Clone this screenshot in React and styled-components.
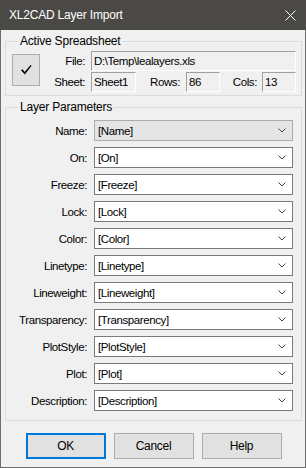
import React from "react";
import styled, { createGlobalStyle } from "styled-components";

const GlobalStyle = createGlobalStyle`
  html, body {
    margin: 0;
    padding: 0;
    background: #f0f0f0;
  }
  * {
    box-sizing: border-box;
  }
`;

const Window = styled.div`
  width: 306px;
  height: 468px;
  border: 1px solid #6d6d6d;
  border-top: none;
  background: #f0f0f0;
  font-family: "Liberation Sans", Arial, sans-serif;
  font-size: 11.5px;
  letter-spacing: -0.4px;
  color: #000;
  display: flex;
  flex-direction: column;
`;

const TitleBar = styled.div`
  height: 30px;
  margin: 0 -1px;
  background: #4a4946;
  color: #fff;
  display: flex;
  align-items: center;
  justify-content: space-between;
  padding: 0 10px 0 9px;
  font-size: 12px;
  letter-spacing: -0.2px;
`;

const CloseIcon = () => (
  <svg width="11" height="11" viewBox="0 0 11 11">
    <path d="M0.5 0.5 L10.5 10.5 M10.5 0.5 L0.5 10.5" stroke="#fff" strokeWidth="1" />
  </svg>
);

const Body = styled.div`
  flex: 1;
  display: flex;
  flex-direction: column;
  padding: 4px 3px 0 4px;
`;

const GroupBox = styled.fieldset`
  margin: ${(p) => p.$top || 0}px 0 0 0;
  padding: ${(p) => p.$pad};
  border: 1px solid #dcdcdc;
  min-width: 0;
`;

const Legend = styled.legend`
  margin-left: 6px;
  padding: 0 2px;
  font-size: 12px;
  line-height: 14px;
  letter-spacing: -0.2px;
`;

const SheetRow = styled.div`
  display: flex;
  align-items: flex-start;
`;

const CheckButton = styled.button`
  width: 29px;
  height: 32px;
  margin: 3px 5px 0 0;
  padding: 0;
  border: 1px solid #adadad;
  background: #e1e1e1;
  display: flex;
  align-items: center;
  justify-content: center;
`;

const CheckIcon = () => (
  <svg width="11" height="10" viewBox="0 0 11 10">
    <polygon points="0,5.2 1.6,4.2 3.6,7 9.6,0 10.6,0.7 3.8,9.6" fill="#000" />
  </svg>
);

const Fields = styled.div`
  flex: 1;
  display: flex;
  flex-direction: column;
  gap: 1px;
`;

const FieldLine = styled.div`
  display: flex;
  align-items: center;
  height: 20px;
`;

const FieldLabel = styled.span`
  width: ${(p) => p.$w}px;
  text-align: right;
  padding-right: ${(p) => p.$gap}px;
  white-space: nowrap;
`;

const ReadOnly = styled.div`
  height: 20px;
  width: ${(p) => (p.$w ? `${p.$w}px` : "auto")};
  flex: ${(p) => (p.$w ? "none" : 1)};
  border: 1px solid;
  border-color: #a0a0a0 #ffffff #ffffff #a0a0a0;
  padding: 0 2px;
  line-height: 18px;
  white-space: nowrap;
  overflow: hidden;
`;

const ParamGrid = styled.div`
  display: grid;
  grid-template-columns: 75px 199px;
  column-gap: 7px;
  row-gap: 6px;
  align-items: center;
`;

const ParamLabel = styled.label`
  text-align: right;
  white-space: nowrap;
`;

const Combo = styled.div`
  height: 21px;
  border: 1px solid ${(p) => (p.$disabled ? "#adadad" : "#7a7a7a")};
  background: ${(p) => (p.$disabled ? "#e5e5e5" : "#ffffff")};
  display: flex;
  align-items: center;
  justify-content: space-between;
  padding: 0 6px 0 3px;
`;

const Chevron = () => (
  <svg width="8" height="5" viewBox="0 0 8 5">
    <polyline points="0.5,0.5 4,4 7.5,0.5" fill="none" stroke="#444" strokeWidth="1" />
  </svg>
);

const ButtonBar = styled.div`
  display: flex;
  justify-content: center;
  gap: 8px;
  margin-top: 12px;
`;

const DialogButton = styled.button`
  width: 80px;
  height: 26px;
  border: ${(p) => (p.$default ? "2px solid #0078d7" : "1px solid #adadad")};
  background: #e1e1e1;
  font-family: "Liberation Sans", Arial, sans-serif;
  font-size: 12px;
  letter-spacing: -0.3px;
  color: #000;
  padding: 0;
`;

const params = [
  "Name",
  "On",
  "Freeze",
  "Lock",
  "Color",
  "Linetype",
  "Lineweight",
  "Transparency",
  "PlotStyle",
  "Plot",
  "Description",
];

export default function App() {
  return (
    <>
      <GlobalStyle />
      <Window>
        <TitleBar>
          <span>XL2CAD Layer Import</span>
          <CloseIcon />
        </TitleBar>
        <Body>
          <GroupBox $pad="3px 5px 3px 6px">
            <Legend>Active Spreadsheet</Legend>
            <SheetRow>
              <CheckButton>
                <CheckIcon />
              </CheckButton>
              <Fields>
                <FieldLine>
                  <FieldLabel $w={46} $gap={6}>File:</FieldLabel>
                  <ReadOnly>D:\Temp\lealayers.xls</ReadOnly>
                </FieldLine>
                <FieldLine>
                  <FieldLabel $w={46} $gap={6}>Sheet:</FieldLabel>
                  <ReadOnly $w={45}>Sheet1</ReadOnly>
                  <FieldLabel $w={50} $gap={6}>Rows:</FieldLabel>
                  <ReadOnly $w={34}>86</ReadOnly>
                  <FieldLabel $w={42} $gap={5}>Cols:</FieldLabel>
                  <ReadOnly $w={34}>13</ReadOnly>
                </FieldLine>
              </Fields>
            </SheetRow>
          </GroupBox>
          <GroupBox $top={4} $pad="6px 8px 9px 6px">
            <Legend>Layer Parameters</Legend>
            <ParamGrid>
              {params.map((name, i) => (
                <React.Fragment key={name}>
                  <ParamLabel>{name}:</ParamLabel>
                  <Combo $disabled={i === 0}>
                    <span>[{name}]</span>
                    <Chevron />
                  </Combo>
                </React.Fragment>
              ))}
            </ParamGrid>
          </GroupBox>
          <ButtonBar>
            <DialogButton $default>OK</DialogButton>
            <DialogButton>Cancel</DialogButton>
            <DialogButton>Help</DialogButton>
          </ButtonBar>
        </Body>
      </Window>
    </>
  );
}
